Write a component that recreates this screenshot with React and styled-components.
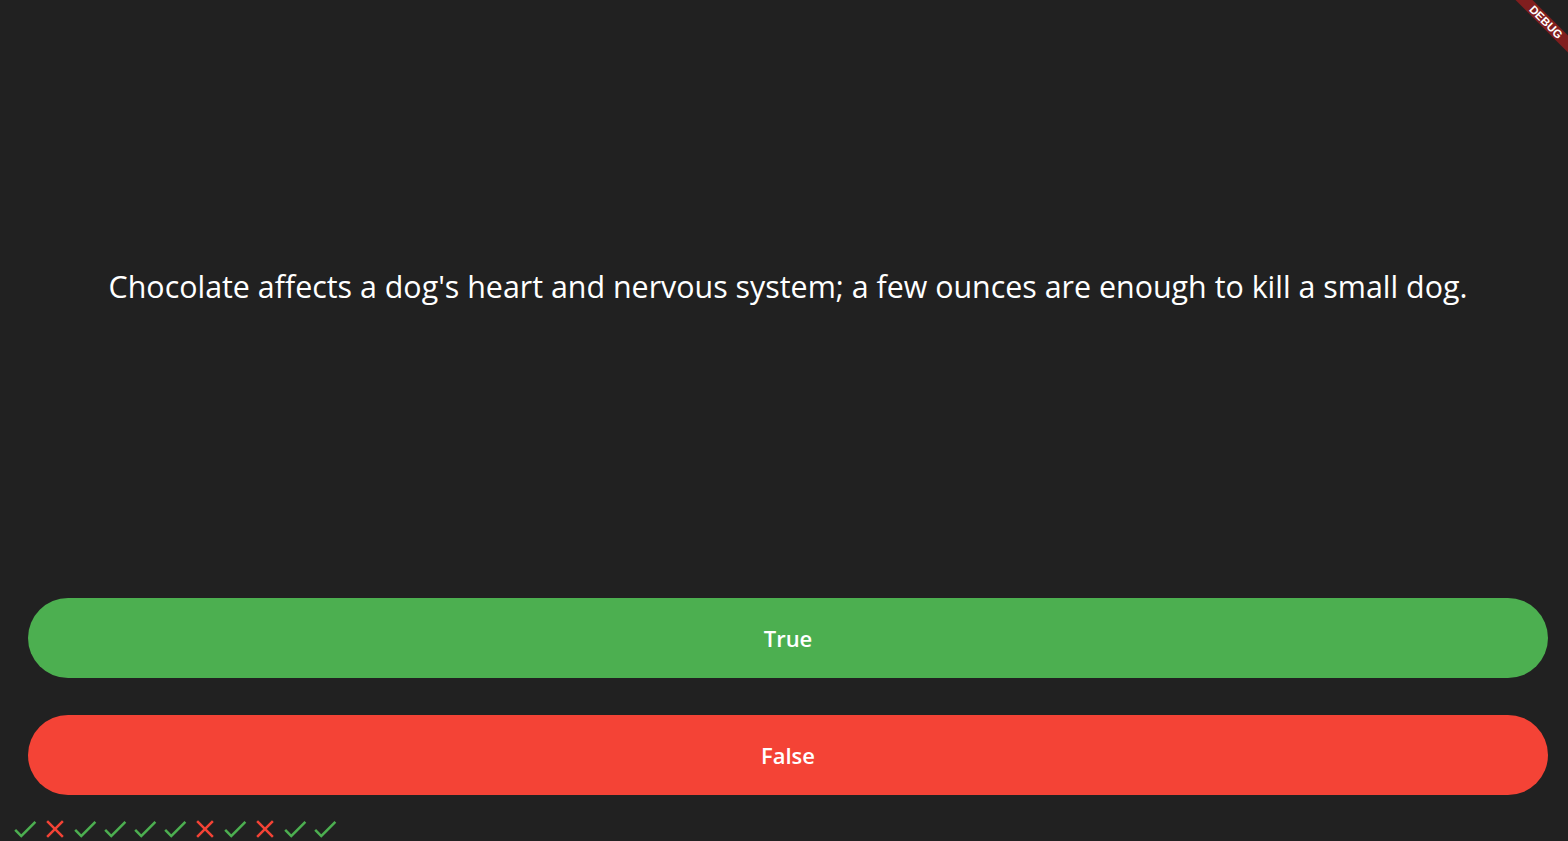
import React from "react";
import styled, { createGlobalStyle } from "styled-components";

const Global = createGlobalStyle`
  html, body { margin: 0; padding: 0; background: #212121; }
  body { font-family: "Open Sans", "Noto Sans", sans-serif; overflow: hidden; }
`;

const Screen = styled.div`
  position: relative;
  height: 841px;
  overflow: hidden;
  background: #212121;
  display: flex;
  flex-direction: column;
  padding: 0 20px 0 28px;
  box-sizing: border-box;
`;

const QuestionArea = styled.div`
  height: 574px;
  flex: none;
  display: flex;
  align-items: center;
  justify-content: center;
`;

const QuestionText = styled.p`
  margin: 0;
  color: #ffffff;
  font-size: 30.4px;
  line-height: 1.2;
  text-align: center;
  white-space: nowrap;
`;

const Buttons = styled.div`
  display: flex;
  flex-direction: column;
  gap: 37px;
  margin-top: 24px;
`;

const AnswerButton = styled.button`
  height: 80px;
  border: none;
  border-radius: 40px;
  background: ${(p) => p.$color};
  color: #ffffff;
  font-family: "Open Sans", "Noto Sans", sans-serif;
  font-weight: 600;
  font-size: 22px;
  cursor: pointer;
  padding: 0;
`;

const ScoreRow = styled.div`
  display: flex;
  margin-top: 19px;
  margin-left: -18px;
  flex: none;
`;

const Icon = styled.svg`
  width: 30px;
  height: 30px;
  flex: none;
`;

const Banner = styled.div`
  position: absolute;
  top: 16px;
  right: -38px;
  width: 120px;
  height: 12px;
  transform: rotate(45deg);
  background: rgba(183, 28, 28, 0.63);
  color: #fff;
  font-family: "Liberation Sans", sans-serif;
  font-weight: 900;
  font-size: 11.5px;
  line-height: 12px;
  text-align: center;
`;

const Check = () => (
  <Icon viewBox="0 0 24 24">
    <path fill="#4CAF50" d="M9 16.17L4.83 12l-1.42 1.41L9 19 21 7l-1.41-1.41z" />
  </Icon>
);

const Close = () => (
  <Icon viewBox="0 0 24 24">
    <path
      fill="#F44336"
      d="M19 6.41L17.59 5 12 10.59 6.41 5 5 6.41 10.59 12 5 17.59 6.41 19 12 13.41 17.59 19 19 17.59 13.41 12z"
    />
  </Icon>
);

const scores = [true, false, true, true, true, true, false, true, false, true, true];

export default function App() {
  return (
    <>
      <Global />
      <Screen>
        <QuestionArea>
          <QuestionText>
            Chocolate affects a dog's heart and nervous system; a few ounces are enough to kill a small dog.
          </QuestionText>
        </QuestionArea>
        <Buttons>
          <AnswerButton $color="#4CAF50">True</AnswerButton>
          <AnswerButton $color="#F44336">False</AnswerButton>
        </Buttons>
        <ScoreRow>
          {scores.map((s, i) => (s ? <Check key={i} /> : <Close key={i} />))}
        </ScoreRow>
        <Banner>DEBUG</Banner>
      </Screen>
    </>
  );
}
